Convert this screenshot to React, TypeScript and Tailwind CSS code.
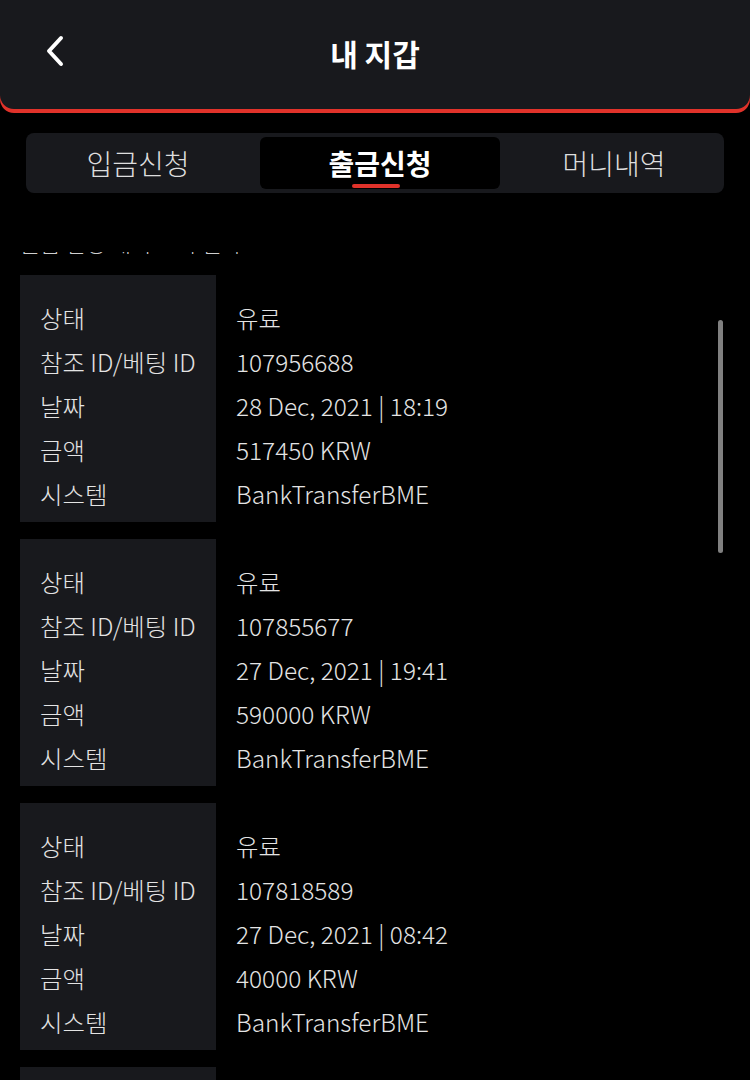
import React from "react";

const records = [
  { id: "107956688", date: "28 Dec, 2021 | 18:19", amount: "517450 KRW" },
  { id: "107855677", date: "27 Dec, 2021 | 19:41", amount: "590000 KRW" },
  { id: "107818589", date: "27 Dec, 2021 | 08:42", amount: "40000 KRW" },
  { id: "107800000", date: "26 Dec, 2021 | 10:00", amount: "10000 KRW" },
];

const font = { fontFamily: '"Noto Sans CJK KR", "Noto Sans", sans-serif' };

function Card({ r }: { r: (typeof records)[number] }) {
  const rows: [string, string][] = [
    ["상태", "유료"],
    ["참조 ID/베팅 ID", r.id],
    ["날짜", r.date],
    ["금액", r.amount],
    ["시스템", "BankTransferBME"],
  ];
  return (
    <div className="flex h-[247px] shrink-0">
      <div className="w-[196px] bg-[#18191d] pl-[20px] pt-[21px]">
        {rows.map(([l]) => (
          <div key={l} className="h-[44px] leading-[44px] text-[24.4px] font-light text-[#e4e4e4] whitespace-nowrap">
            {l}
          </div>
        ))}
      </div>
      <div className="pl-[20px] pt-[21px]">
        {rows.map(([l, v]) => (
          <div key={l} className="h-[44px] leading-[44px] text-[24.4px] font-light text-[#e4e4e4] whitespace-nowrap">
            {v}
          </div>
        ))}
      </div>
    </div>
  );
}

export default function App() {
  return (
    <div className="w-[750px] h-[1080px] bg-black overflow-hidden relative" style={font}>
      <header className="h-[113px] bg-[#e0322a] rounded-b-[14px]">
        <div className="h-[109px] bg-[#18191d] rounded-b-[14px] flex items-center justify-center relative">
          <button className="absolute left-[42px] top-[34px] text-white">
            <svg width="28" height="34" viewBox="0 0 28 34" fill="none">
              <path d="M19 4 L7 17 L19 30" stroke="white" strokeWidth="4" strokeLinecap="round" strokeLinejoin="round" />
            </svg>
          </button>
          <h1 className="text-white text-[30px] font-bold mt-[-2px]">내 지갑</h1>
        </div>
      </header>

      <div className="mx-[26px] mt-[20px] h-[60px] bg-[#18191d] rounded-[8px] flex items-center pl-[4px] pr-[4px]">
        <div className="w-[230px] h-[52px] flex items-center justify-center pr-[14px] text-[28px] font-light text-[#dedede]">입금신청</div>
        <div className="w-[240px] h-[52px] bg-black rounded-[6px] flex items-center justify-center relative">
          <span className="text-[28px] font-bold text-white">출금신청</span>
          <span className="absolute left-[92px] bottom-[1px] w-[48px] h-[4px] rounded-full bg-[#e0322a]" />
        </div>
        <div className="flex-1 h-[52px] flex items-center justify-center pl-[8px] text-[28px] font-light text-[#dedede]">머니내역</div>
      </div>

      <div className="h-[2px] mt-[59px] overflow-hidden ml-[20px]">
        <div className="text-[22px] font-light leading-[30px] text-[#cfcfcf] mt-[-25px] whitespace-nowrap">출금 신청 내역 조회 결과</div>
      </div>

      <div className="relative mt-[21px] mx-[20px] flex flex-col gap-[17px]">
        {records.map((r) => (
          <Card key={r.id} r={r} />
        ))}
      </div>

      <div className="absolute left-[718px] top-[320px] w-[5px] h-[233px] rounded-full bg-[#808080]" />
    </div>
  );
}
